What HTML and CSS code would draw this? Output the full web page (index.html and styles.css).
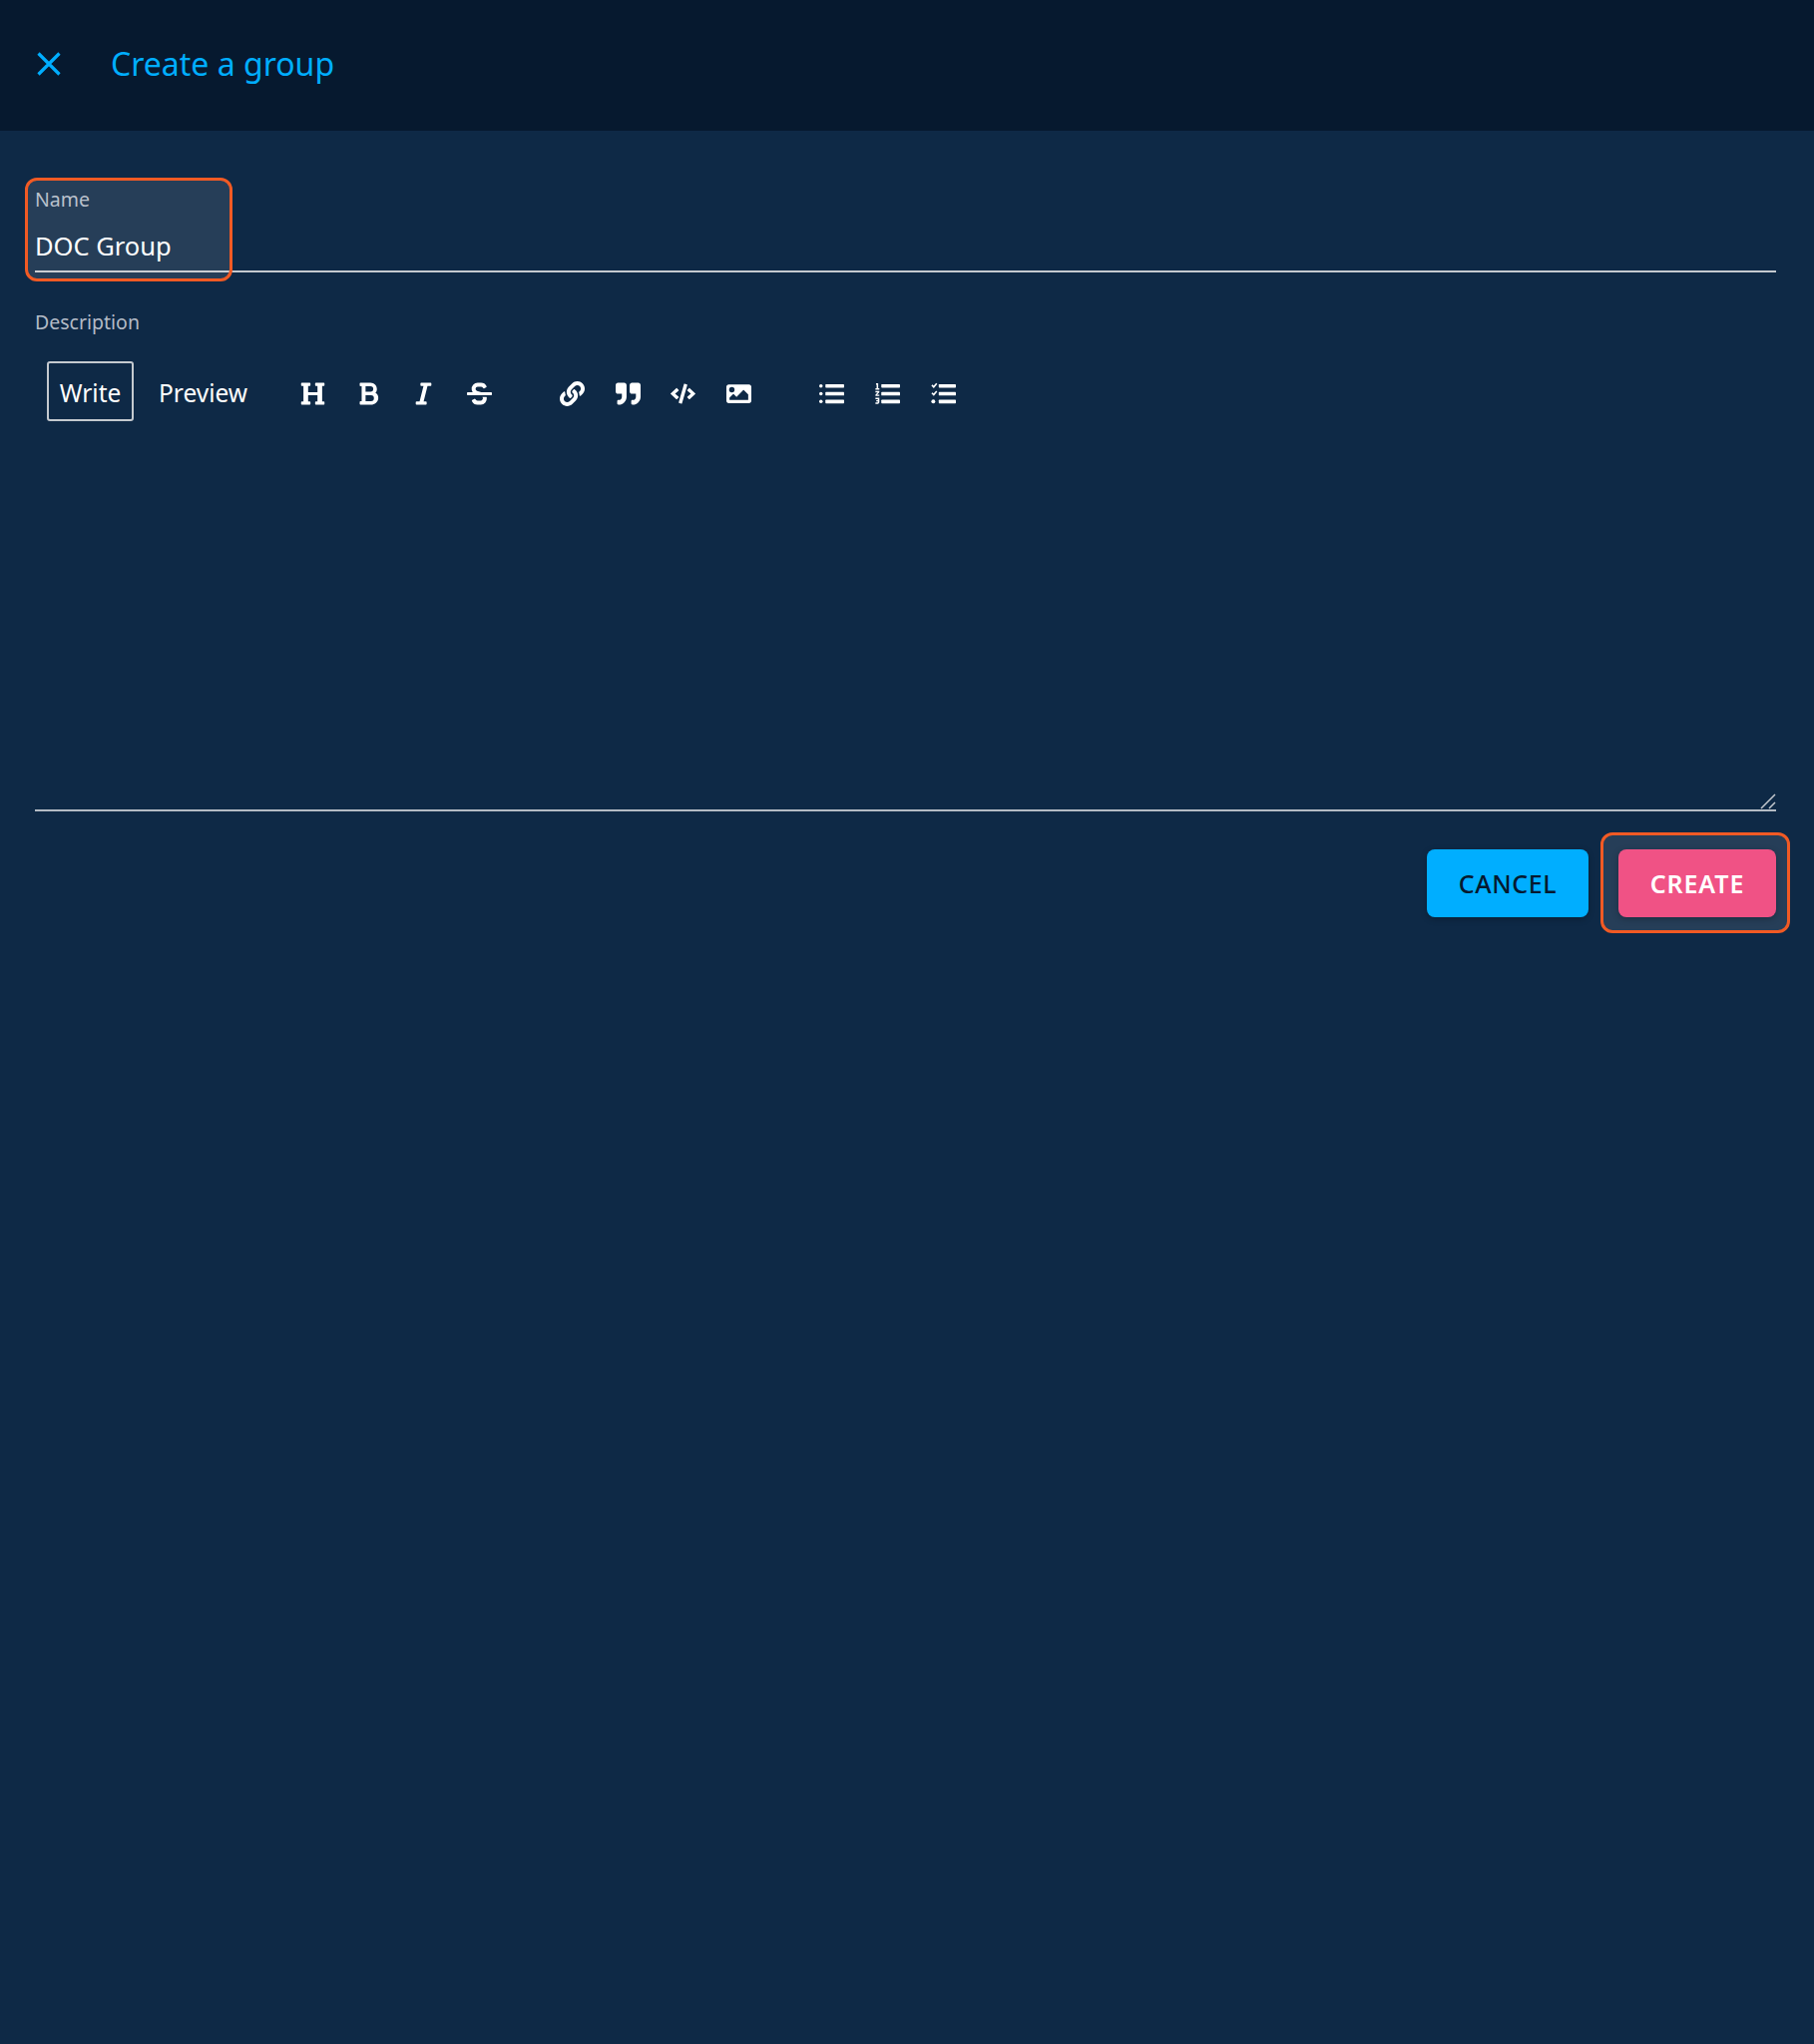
FILE: index.html
```html
<!DOCTYPE html>
<html lang="en">
<head>
<meta charset="utf-8">
<title>Create a group</title>
<link rel="stylesheet" href="styles.css">
</head>
<body>
<header class="topbar">
  <svg class="close-icon" viewBox="0 0 24 24"><path d="M1.5 1.5 22.5 22.5M22.5 1.5 1.5 22.5"/></svg>
  <h1 class="title">Create a group</h1>
</header>
<main class="content">
  <div class="field name-field">
    <div class="highlight name-highlight"></div>
    <div class="label">Name</div>
    <div class="value">DOC Group</div>
  </div>
  <div class="label desc-label">Description</div>
  <div class="editor">
    <div class="toolbar">
      <div class="tabs">
        <span class="tab active">Write</span>
        <span class="tab">Preview</span>
      </div>
      <div class="group">
        <svg class="ico" viewBox="0 0 512 512"><path d="M448 96v320h32a16 16 0 0 1 16 16v32a16 16 0 0 1-16 16H320a16 16 0 0 1-16-16v-32a16 16 0 0 1 16-16h32V288H160v128h32a16 16 0 0 1 16 16v32a16 16 0 0 1-16 16H32a16 16 0 0 1-16-16v-32a16 16 0 0 1 16-16h32V96H32a16 16 0 0 1-16-16V48a16 16 0 0 1 16-16h160a16 16 0 0 1 16 16v32a16 16 0 0 1-16 16h-32v128h192V96h-32a16 16 0 0 1-16-16V48a16 16 0 0 1 16-16h160a16 16 0 0 1 16 16v32a16 16 0 0 1-16 16z"/></svg>
        <svg class="ico" viewBox="0 0 384 512"><path fill-rule="evenodd" d="M333.5 238a122 122 0 0 0 27-65.2C367.9 96.5 306.8 32 230 32H24A16 16 0 0 0 8 48v40a16 16 0 0 0 16 16h24v304H24a16 16 0 0 0-16 16v40a16 16 0 0 0 16 16h216c75.3 0 142.7-54.1 149.4-129.2 4.7-52.3-21.2-99.7-55.9-110.8zM128 104h102a56 56 0 0 1 0 112H128zm112 304H128V288h112a60 60 0 0 1 0 120z"/></svg>
        <svg class="ico" viewBox="0 0 320 512"><path d="M320 48v32a16 16 0 0 1-16 16h-62.76l-80 320H208a16 16 0 0 1 16 16v32a16 16 0 0 1-16 16H16a16 16 0 0 1-16-16v-32a16 16 0 0 1 16-16h62.76l80-320H112a16 16 0 0 1-16-16V48a16 16 0 0 1 16-16h192a16 16 0 0 1 16 16z"/></svg>
        <svg class="ico" viewBox="0 0 512 512"><path d="M496 224H293.9l-87.2-26.8A43.6 43.6 0 0 1 219.6 112h66.8a49.9 49.9 0 0 1 44.6 27.6 16 16 0 0 0 21.5 7.1l42.9-21.4a16 16 0 0 0 7.2-21.5l-.5-1A128 128 0 0 0 287.5 32h-68a123.7 123.7 0 0 0-123 135.6c2 20.9 10.1 39.8 21.8 56.4H16a16 16 0 0 0-16 16v32a16 16 0 0 0 16 16h480a16 16 0 0 0 16-16v-32a16 16 0 0 0-16-16zM315.5 320c7.5 7.6 11.9 17.9 11.9 29 0 22.3-18.1 49-43.4 49h-66.3a49.9 49.9 0 0 1-44.7-27.6 16 16 0 0 0-21.4-7.1l-43 21.5a16 16 0 0 0-7.1 21.4l.5 1A128 128 0 0 0 216 480h68a123.7 123.7 0 0 0 123-135.6c-.9-8.6-2.8-16.6-5.4-24.4z"/></svg>
      </div>
      <div class="group">
        <svg class="ico" viewBox="0 0 512 512"><path d="M326.612 185.391c59.747 59.809 58.927 155.698.36 214.59-.11.12-.24.25-.36.37l-67.2 67.2c-59.27 59.27-155.699 59.262-214.96 0-59.27-59.26-59.27-155.7 0-214.96l37.106-37.106c9.84-9.84 26.786-3.3 27.294 10.606.648 17.722 3.826 35.527 9.69 52.721 1.986 5.822.567 12.262-3.783 16.612l-13.087 13.087c-28.026 28.026-28.905 73.66-1.155 101.96 28.024 28.579 74.086 28.749 102.325.51l67.2-67.19c28.191-28.191 28.073-73.757 0-101.83-3.701-3.694-7.429-6.564-10.341-8.569a16.037 16.037 0 0 1-6.947-12.606c-.396-10.567 3.348-21.456 11.698-29.806l21.054-21.055c5.521-5.521 14.182-6.199 20.584-1.731a152.482 152.482 0 0 1 20.522 17.197zM467.547 44.449c-59.261-59.262-155.69-59.27-214.96 0l-67.2 67.2c-.12.12-.25.25-.36.37-58.566 58.892-59.387 154.781.36 214.59a152.454 152.454 0 0 0 20.521 17.196c6.402 4.468 15.064 3.789 20.584-1.731l21.054-21.055c8.35-8.35 12.094-19.239 11.698-29.806a16.037 16.037 0 0 0-6.947-12.606c-2.912-2.005-6.64-4.875-10.341-8.569-28.073-28.073-28.191-73.639 0-101.83l67.2-67.19c28.239-28.239 74.3-28.069 102.325.51 27.75 28.3 26.872 73.934-1.155 101.96l-13.087 13.087c-4.35 4.35-5.769 10.79-3.783 16.612 5.864 17.194 9.042 34.999 9.69 52.721.509 13.906 17.454 20.446 27.294 10.606l37.106-37.106c59.271-59.259 59.271-155.699.001-214.959z"/></svg>
        <svg class="ico" viewBox="0 0 512 512"><path d="M464 32H336c-26.5 0-48 21.5-48 48v128c0 26.5 21.5 48 48 48h80v64c0 35.3-28.7 64-64 64h-8c-13.3 0-24 10.7-24 24v48c0 13.3 10.7 24 24 24h8c88.4 0 160-71.6 160-160V80c0-26.5-21.5-48-48-48zm-288 0H48C21.5 32 0 53.5 0 80v128c0 26.5 21.5 48 48 48h80v64c0 35.3-28.7 64-64 64h-8c-13.3 0-24 10.7-24 24v48c0 13.3 10.7 24 24 24h8c88.4 0 160-71.6 160-160V80c0-26.5-21.5-48-48-48z"/></svg>
        <svg class="ico" viewBox="0 0 640 512"><path d="M278.9 511.5l-61-17.7c-6.4-1.8-10-8.5-8.2-14.9L346.2 8.7c1.8-6.4 8.5-10 14.9-8.2l61 17.7c6.4 1.8 10 8.5 8.2 14.9L293.8 503.3c-1.9 6.4-8.5 10.1-14.9 8.2zm-114-112.2l43.5-46.4c4.6-4.9 4.3-12.7-.8-17.2L117 256l90.6-79.7c5.1-4.5 5.5-12.3.8-17.2l-43.5-46.4c-4.5-4.8-12.1-5.1-17-.5L3.8 247.2c-5.1 4.7-5.1 12.8 0 17.5l144.1 135.1c4.9 4.6 12.5 4.4 17-.5zm327.2.6l144.1-135.1c5.1-4.7 5.1-12.8 0-17.5L492.1 112.1c-4.8-4.5-12.4-4.3-17 .5L431.6 159c-4.6 4.9-4.3 12.7.8 17.2L523 256l-90.6 79.7c-5.1 4.5-5.5 12.3-.8 17.2l43.5 46.4c4.5 4.9 12.1 5.1 17 .6z"/></svg>
        <svg class="ico" viewBox="0 0 512 512"><path fill-rule="evenodd" d="M464 448H48c-26.5 0-48-21.5-48-48V112c0-26.5 21.5-48 48-48h416c26.5 0 48 21.5 48 48v288c0 26.5-21.5 48-48 48zM112 120a56 56 0 1 0 0 112 56 56 0 0 0 0-112zM64 384h384V272l-87.5-87.5c-4.7-4.7-12.3-4.7-17 0L208 320l-55.5-55.5c-4.7-4.7-12.3-4.7-17 0L64 336z"/></svg>
      </div>
      <div class="group">
        <svg class="ico" viewBox="0 0 512 512"><circle cx="36" cy="96" r="36"/><circle cx="36" cy="256" r="36"/><circle cx="36" cy="416" r="36"/><rect x="128" y="60" width="384" height="74" rx="14"/><rect x="128" y="220" width="384" height="74" rx="14"/><rect x="128" y="380" width="384" height="74" rx="14"/></svg>
        <svg class="ico" viewBox="0 0 512 512"><path d="M20 40h44v104h24v28H8v-28h24V72H20zM8 200h80v26l-46 50h46v28H8v-26l46-50H8zM8 340h80v96l-24 28H8v-28h48v-20H24v-26h32v-22H8z"/><rect x="128" y="60" width="384" height="74" rx="14"/><rect x="128" y="220" width="384" height="74" rx="14"/><rect x="128" y="380" width="384" height="74" rx="14"/></svg>
        <svg class="ico" viewBox="0 0 512 512"><path d="M8 92 32 68l24 24 50-58 24 22-72 86zM8 252l24-24 24 24 50-58 24 22-72 86z"/><circle cx="48" cy="416" r="40"/><rect x="160" y="60" width="352" height="74" rx="14"/><rect x="160" y="220" width="352" height="74" rx="14"/><rect x="160" y="380" width="352" height="74" rx="14"/></svg>
      </div>
    </div>
    <div class="text-area">
      <svg class="grip" viewBox="0 0 16 16"><path d="M15 1 1 15M15 9 9 15"/></svg>
    </div>
  </div>
  <div class="actions">
    <button class="btn cancel">CANCEL</button>
    <div class="create-wrap">
      <div class="highlight create-highlight"></div>
      <button class="btn create">CREATE</button>
    </div>
  </div>
</main>
</body>
</html>
```
FILE: styles.css
```css
* { box-sizing: border-box; }
html, body { margin: 0; height: 100%; }
body {
  background: #0e2946;
  color: #fff;
  font-family: "Noto Sans", "Open Sans", sans-serif;
  min-height: 2048px;
}
.topbar {
  height: 131px;
  background: #06192f;
  display: flex;
  align-items: center;
  padding-left: 37px;
  gap: 50px;
}
.close-icon { width: 24px; height: 24px; fill: none; stroke: #00aeff; stroke-width: 3.2; margin-bottom: 4px; }
.title { margin: 0 0 4px; font-size: 32px; font-weight: 400; color: #00aeff; line-height: 1; }
.content { padding: 49px 38px 0 35px; }
.field { position: relative; height: 93px; border-bottom: 2px solid #c4c9cf; }
.highlight {
  position: absolute;
  background: rgba(255,255,255,.1);
  border: 3px solid #f15a24;
  border-radius: 12px;
  pointer-events: none;
}
.name-highlight { left: -10px; top: -2px; width: 208px; height: 104px; }
.label { font-size: 19.5px; line-height: 24px; color: #b3bbc6; }
.name-field .label { padding-top: 8px; height: 32px; }
.value { position: relative; margin-top: 16px; font-size: 25.5px; line-height: 36px; color: #fff; }
.desc-label { margin-top: 38px; }
.toolbar { display: flex; align-items: center; padding: 27px 0 0 12px; height: 87px; }
.tabs { display: flex; align-items: center; gap: 25px; width: 254px; }
.tab { font-size: 24.5px; line-height: 30px; color: #fff; padding-top: 3px; }
.tab.active { width: 87px; height: 60px; border: 2px solid #c4c9cf; border-radius: 3px; display: flex; align-items: center; justify-content: center; }
.group { display: flex; gap: 30.7px; margin-right: 68px; padding-top: 5px; }
.ico { width: 25px; height: 25px; fill: #fff; display: block; }
.text-area { position: relative; height: 392px; border-bottom: 2px solid #b4bbc4; margin-top: -1px; }
.grip { position: absolute; right: 0; bottom: 0; width: 16px; height: 16px; fill: none; stroke: #c4c9cf; stroke-width: 1.5; }
.actions { display: flex; justify-content: flex-end; align-items: center; gap: 30px; margin-top: 38px; }
.btn {
  border: 0;
  height: 68px;
  border-radius: 8px;
  font-family: inherit;
  font-size: 25px;
  display: block;
  box-shadow: 0 2px 6px rgba(0,0,0,.25);
}
.cancel { width: 162px; background: #00aeff; color: #06192f; font-weight: 500; letter-spacing: .6px; }
.create { width: 158px; background: #f05285; color: #fff; font-weight: 600; letter-spacing: .9px; position: relative; }
.create-wrap { position: relative; }
.create-highlight { left: -18px; top: -17px; right: -14px; bottom: -16px; }
```
